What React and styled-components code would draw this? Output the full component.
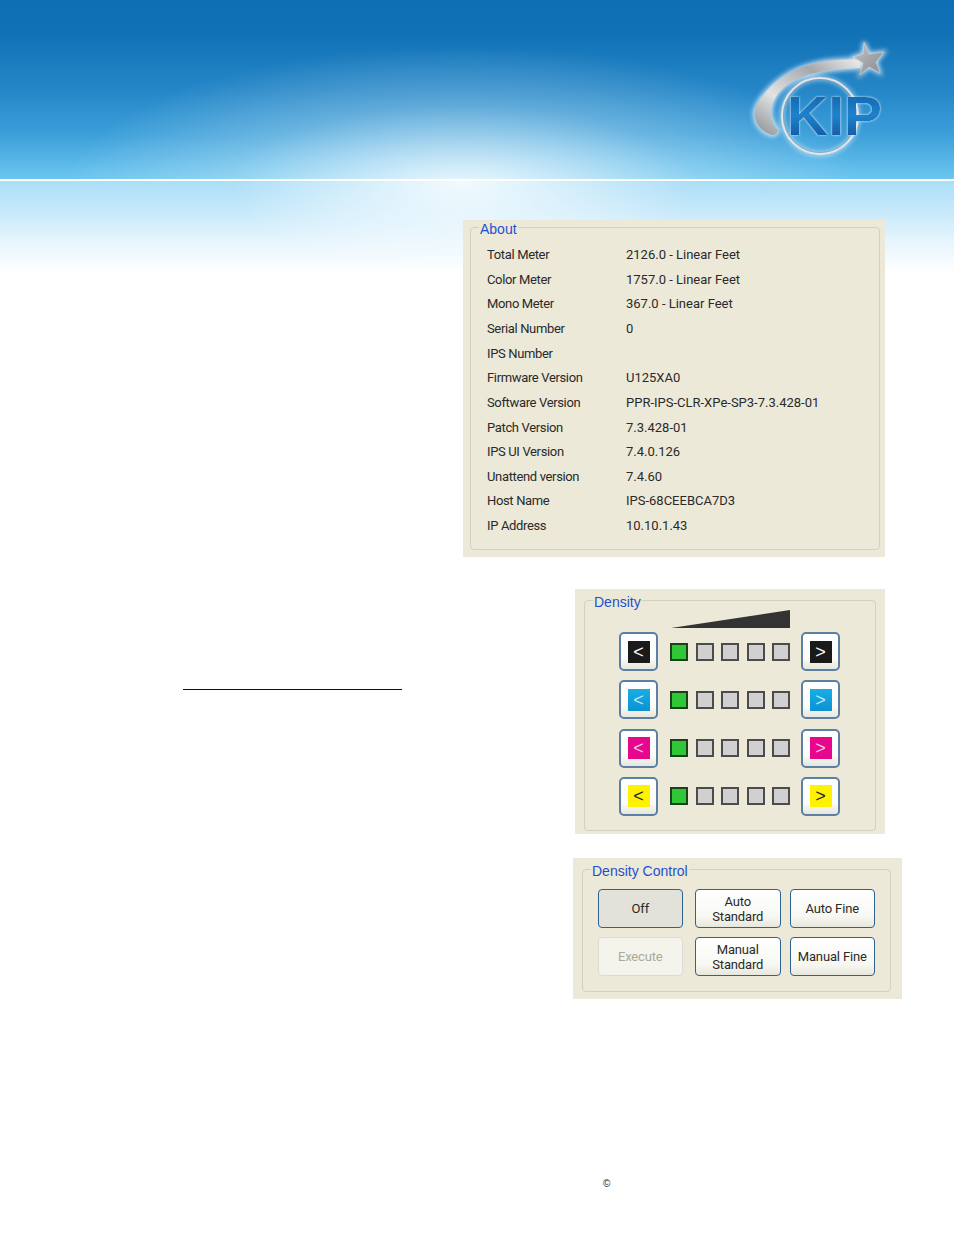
import React from "react";
import styled, { createGlobalStyle } from "styled-components";

const GlobalStyle = createGlobalStyle`
  html, body {
    margin: 0;
    padding: 0;
    background: #fff;
  }
  body {
    font-family: "Liberation Sans", Arial, sans-serif;
    color: #1d1d1d;
  }
`;

const Page = styled.div`
  width: 954px;
  min-height: 1235px;
  overflow: hidden;
`;

const Banner = styled.header`
  height: 179px;
  box-sizing: border-box;
  padding: 30px 59px 0 0;
  display: flex;
  justify-content: flex-end;
  background:
    radial-gradient(ellipse 400px 150px at 462px 195px, rgba(255, 255, 255, 0.92) 0%, rgba(255, 255, 255, 0.6) 28%, rgba(255, 255, 255, 0.24) 60%, rgba(255, 255, 255, 0) 100%),
    linear-gradient(180deg, #0f6db3 0%, #1172b7 20%, #2586c7 50%, #3c9fd9 75%, #6cc6f0 100%);
`;

const WhiteLine = styled.div`
  height: 2px;
  background: #fff;
`;

const Content = styled.main`
  padding-top: 39px;
  display: flex;
  flex-direction: column;
  background:
    radial-gradient(ellipse 230px 95px at 462px 0, rgba(255, 255, 255, 0.85) 0%, rgba(255, 255, 255, 0) 100%) no-repeat 0 0 / 100% 100px,
    linear-gradient(180deg, #aadef7 0%, #c4e8fa 30%, #e6f5fd 65%, #ffffff 100%) no-repeat 0 0 / 100% 92px;
`;

const Panel = styled.section`
  box-sizing: border-box;
  background: #ece9d8;
  width: ${(p) => p.$width}px;
  height: ${(p) => p.$height}px;
  padding: ${(p) => p.$pad};
`;

const AboutRow = styled.div`
  display: flex;
  justify-content: flex-end;
  padding-right: 69px;
`;

const DensityRow = styled.div`
  display: flex;
  justify-content: space-between;
  align-items: flex-start;
  margin-top: 32px;
  padding: 0 69px 0 183px;
`;

const SignatureRule = styled.hr`
  width: 219px;
  height: 1px;
  margin: 100px 0 0;
  border: 0;
  background: #111;
`;

const ControlRow = styled.div`
  display: flex;
  justify-content: flex-end;
  margin-top: 24px;
  padding-right: 52px;
`;

const Group = styled.div`
  position: relative;
  box-sizing: border-box;
  height: 100%;
  border: 1px solid #d2d0bf;
  border-radius: 4px;
`;

const GroupLabel = styled.span`
  position: absolute;
  top: -7px;
  left: ${(p) => p.$left}px;
  padding: 0 1px;
  background: #ece9d8;
  color: #1f50d0;
  font-size: 14px;
  line-height: 16px;
`;

const InfoGrid = styled.dl`
  margin: 0;
  padding: 14.4px 0 0 16px;
  display: grid;
  grid-template-columns: 139px 1fr;
  grid-auto-rows: 24.64px;
  align-items: center;
  font-family: Roboto, "Liberation Sans", sans-serif;
  font-size: 13px;
  color: #2a2a2a;
  dt, dd {
    margin: 0;
    white-space: nowrap;
  }
  dt {
    letter-spacing: -0.35px;
  }
`;

const DensityBody = styled.div`
  padding: 9px 0 0 34px;
  display: flex;
  flex-direction: column;
  gap: 9.33px;
`;

const Wedge = styled.svg`
  display: block;
  width: 119px;
  height: 18px;
  margin: 0 0 -5.33px 52px;
`;

const StepRow = styled.div`
  display: flex;
  align-items: center;
`;

const StepButton = styled.button`
  box-sizing: border-box;
  width: 39px;
  height: 39px;
  padding: 0;
  display: flex;
  align-items: center;
  justify-content: center;
  border: 2px solid #5b80a4;
  border-radius: 5px;
  background: linear-gradient(180deg, #ffffff 0%, #fbfbf8 70%, #e6e6dc 100%);
`;

const Swatch = styled.span`
  width: 22px;
  height: 22px;
  display: flex;
  align-items: center;
  justify-content: center;
  background: ${(p) => p.$bg};
  color: ${(p) => p.$fg};
  font-size: 18px;
  line-height: 22px;
`;

const Squares = styled.div`
  display: flex;
  gap: 7.5px;
  margin: 0 11px 0 12px;
`;

const Square = styled.span`
  box-sizing: border-box;
  width: 18px;
  height: 18px;
  border: 2px solid ${(p) => (p.$on ? "#1c3f1e" : "#4c4c4c")};
  background: ${(p) => (p.$on ? "#2fc737" : "#d0d0d0")};
`;

const ControlGrid = styled.div`
  padding: 19px 0 0 14.5px;
  display: grid;
  grid-template-columns: 97.5px 94.5px 85.5px;
  grid-auto-rows: 39px;
  row-gap: 9px;
`;

const ControlButton = styled.button`
  box-sizing: border-box;
  width: 85.5px;
  height: 39px;
  padding: 0;
  border: 1.5px solid ${(p) => (p.disabled ? "#dcdbcf" : "#2f6191")};
  border-radius: 4px;
  font-family: Roboto, "Liberation Sans", sans-serif;
  font-size: 13px;
  line-height: 15px;
  letter-spacing: -0.15px;
  color: ${(p) => (p.disabled ? "#a9a99c" : "#2a2a2a")};
  background: ${(p) =>
    p.disabled
      ? "#f4f4ec"
      : p.$pressed
      ? "#e3e2da"
      : "linear-gradient(180deg, #ffffff 0%, #f8f8f3 70%, #e8e7dc 100%)"};
`;

const Footer = styled.footer`
  margin-top: 178px;
  padding-left: 603px;
  font-size: 10px;
  line-height: 14px;
  color: #222;
`;

const aboutRows = [
  ["Total Meter", "2126.0 - Linear Feet"],
  ["Color Meter", "1757.0 - Linear Feet"],
  ["Mono Meter", "367.0 - Linear Feet"],
  ["Serial Number", "0"],
  ["IPS Number", ""],
  ["Firmware Version", "U125XA0"],
  ["Software Version", "PPR-IPS-CLR-XPe-SP3-7.3.428-01"],
  ["Patch Version", "7.3.428-01"],
  ["IPS UI Version", "7.4.0.126"],
  ["Unattend version", "7.4.60"],
  ["Host Name", "IPS-68CEEBCA7D3"],
  ["IP Address", "10.10.1.43"],
];

const channels = [
  { bg: "#1a1a1a", fg: "#fff" },
  { bg: "linear-gradient(180deg, #18aee6 0%, #0b92d2 100%)", fg: "#bfeafa" },
  { bg: "#e6078c", fg: "#ffc4e4" },
  { bg: "#fff200", fg: "#222" },
];

const swooshPath =
  "M125 30 C105 28 80 31 60 40 C42 48 24 66 20 80 C18 92 26 102 37 105 C40 105 43 103 43 100 C36 92 33 82 39 70 C46 56 62 47 80 43 C95 39 110 39 125 38 Z";
const starPath = "M129 12 L134 24 L149 22 L141 32 L145 43 L134 37 L125 45 L128 33 L118 27 L128 24 Z";

const KipLogo = () => (
  <svg width="160" height="130" viewBox="0 0 160 130" aria-label="KIP">
    <defs>
      <linearGradient id="kipBlue" x1="0" y1="0" x2="0" y2="1">
        <stop offset="0" stopColor="#0d5aa6" />
        <stop offset="0.5" stopColor="#1f82cc" />
        <stop offset="1" stopColor="#0b4a92" />
      </linearGradient>
      <linearGradient id="silver" x1="0" y1="1" x2="1" y2="0">
        <stop offset="0" stopColor="#8b8f92" />
        <stop offset="0.35" stopColor="#e2e3e4" />
        <stop offset="0.7" stopColor="#a6a9ac" />
        <stop offset="1" stopColor="#eeeeee" />
      </linearGradient>
      <linearGradient id="starFill" x1="0" y1="0" x2="1" y2="1">
        <stop offset="0" stopColor="#c4c6c8" />
        <stop offset="1" stopColor="#85898d" />
      </linearGradient>
      <filter id="glow" x="-30%" y="-30%" width="160%" height="160%">
        <feGaussianBlur stdDeviation="2.4" />
      </filter>
      <filter id="textGlow" x="-10%" y="-10%" width="120%" height="120%">
        <feDropShadow dx="0" dy="0" stdDeviation="1.2" floodColor="#e6f6fd" />
      </filter>
    </defs>
    <g filter="url(#glow)" fill="#fff" stroke="#fff" strokeWidth="3" opacity="0.8">
      <path d={swooshPath} />
      <path d={starPath} />
      <circle cx="85" cy="86" r="38" fill="none" />
    </g>
    <path d="M122 40 L128 36 L126 48 Z" fill="#3d5d78" opacity="0.5" filter="url(#glow)" />
    <path d={swooshPath} fill="url(#silver)" />
    <path d={starPath} fill="url(#starFill)" stroke="#d8d8d8" strokeWidth="0.5" />
    <circle cx="85" cy="86" r="38" fill="none" stroke="#e4e6e8" strokeWidth="2" />
    <circle cx="85" cy="86" r="36.6" fill="none" stroke="#8d979f" strokeWidth="0.6" />
    <text
      x="52"
      y="105"
      fontFamily='"Liberation Sans", Arial, sans-serif'
      fontWeight="700"
      fontSize="56"
      textLength="95"
      lengthAdjust="spacingAndGlyphs"
      fill="url(#kipBlue)"
      filter="url(#textGlow)"
    >
      KIP
    </text>
  </svg>
);

const App = () => {
  return (
    <Page>
      <GlobalStyle />
      <Banner>
        <KipLogo />
      </Banner>
      <WhiteLine />
      <Content>
        <AboutRow>
          <Panel $width={422} $height={337} $pad="7px 5px 7px 7px">
            <Group>
              <GroupLabel $left={8}>About</GroupLabel>
              <InfoGrid>
                {aboutRows.map(([label, value]) => (
                  <React.Fragment key={label}>
                    <dt>{label}</dt>
                    <dd>{value}</dd>
                  </React.Fragment>
                ))}
              </InfoGrid>
            </Group>
          </Panel>
        </AboutRow>

        <DensityRow>
          <SignatureRule />
          <Panel $width={310} $height={245} $pad="11px 9px 3px 9px">
            <Group>
              <GroupLabel $left={8}>Density</GroupLabel>
              <DensityBody>
                <Wedge viewBox="0 0 119 18">
                  <polygon points="0,18 119,0 119,18" fill="#333" />
                </Wedge>
                {channels.map((c, i) => (
                  <StepRow key={i}>
                    <StepButton>
                      <Swatch $bg={c.bg} $fg={c.fg}>&lt;</Swatch>
                    </StepButton>
                    <Squares>
                      {[0, 1, 2, 3, 4].map((n) => (
                        <Square key={n} $on={n === 0} />
                      ))}
                    </Squares>
                    <StepButton>
                      <Swatch $bg={c.bg} $fg={c.fg}>&gt;</Swatch>
                    </StepButton>
                  </StepRow>
                ))}
              </DensityBody>
            </Group>
          </Panel>
        </DensityRow>

        <ControlRow>
          <Panel $width={329} $height={141} $pad="11px 11px 7px 9px">
            <Group>
              <GroupLabel $left={8}>Density Control</GroupLabel>
              <ControlGrid>
                <ControlButton $pressed>Off</ControlButton>
                <ControlButton>Auto<br />Standard</ControlButton>
                <ControlButton>Auto Fine</ControlButton>
                <ControlButton disabled>Execute</ControlButton>
                <ControlButton>Manual<br />Standard</ControlButton>
                <ControlButton>Manual Fine</ControlButton>
              </ControlGrid>
            </Group>
          </Panel>
        </ControlRow>

        <Footer>©</Footer>
      </Content>
    </Page>
  );
};

export default App;
